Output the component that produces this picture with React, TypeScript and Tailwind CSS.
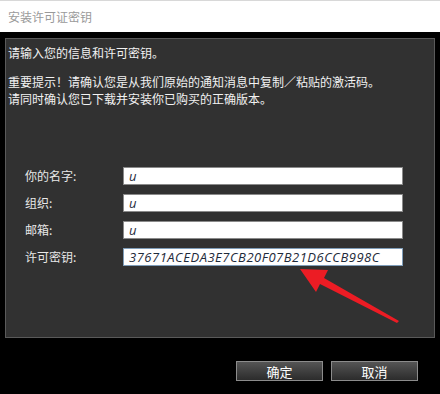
import React from "react";

const cjk = "font-['Noto_Sans_CJK_SC','Noto_Sans',sans-serif]";

const fields = [
  { label: "你的名字:", value: "u" },
  { label: "组织:", value: "u" },
  { label: "邮箱:", value: "u" },
  { label: "许可密钥:", value: "37671ACEDA3E7CB20F07B21D6CCB998C", focused: true },
];

function Arrow() {
  return (
    <svg
      className="absolute left-[290px] top-[260px]"
      width="115"
      height="70"
      viewBox="0 0 115 70"
    >
      <polygon
        points="10,9 38,10 34,18 109,61 107,63 30,24 26,32"
        fill="#ec1c24"
      />
    </svg>
  );
}

export default function App() {
  return (
    <div className={`relative w-[440px] h-[394px] bg-black overflow-hidden ${cjk}`}>
      <div className="h-[32px] bg-white border-t border-[#d8d8d8] flex items-center pl-[8px] text-[12px] text-[#9a9a9a]">
        安装许可证密钥
      </div>

      <div className="px-[5px] pt-[6px]">
        <div className="h-[300px] bg-[#313131] border border-[#5a5a5a] pt-[5px] pl-[2px]">
          <div className="text-[12px] leading-[17px] text-[#f2f2f2]">
            <p>请输入您的信息和许可密钥。</p>
            <p className="h-[12px]" />
            <p>重要提示！请确认您是从我们原始的通知消息中复制／粘贴的激活码。</p>
            <p>请同时确认您已下载并安装你已购买的正确版本。</p>
          </div>

          <div className="mt-[60px] pl-[17px] flex flex-col gap-[9px]">
            {fields.map((f) => (
              <div key={f.label} className="flex items-center h-[18px]">
                <span className="w-[98px] text-[12px] text-[#e8e8e8]">{f.label}</span>
                <div
                  className={`w-[280px] h-[18px] bg-white border flex items-center pl-[5px] ${
                    f.focused ? "border-[#7f9db9]" : "border-[#8a8a8a]"
                  }`}
                >
                  <span className="font-['Open_Sans',sans-serif] italic text-[13px] tracking-[0.5px] leading-none text-[#1e2a3a]">
                    {f.value}
                  </span>
                </div>
              </div>
            ))}
          </div>
        </div>
      </div>

      <div className="flex justify-end gap-[8px] pr-[22px] mt-[23px]">
        {["确定", "取消"].map((t) => (
          <button
            key={t}
            className="w-[87px] h-[20px] border border-[#8c8c8c] bg-gradient-to-b from-[#555555] to-[#2c2c2c] text-[13px] leading-none text-white flex items-center justify-center"
          >
            {t}
          </button>
        ))}
      </div>

      <Arrow />
    </div>
  );
}
